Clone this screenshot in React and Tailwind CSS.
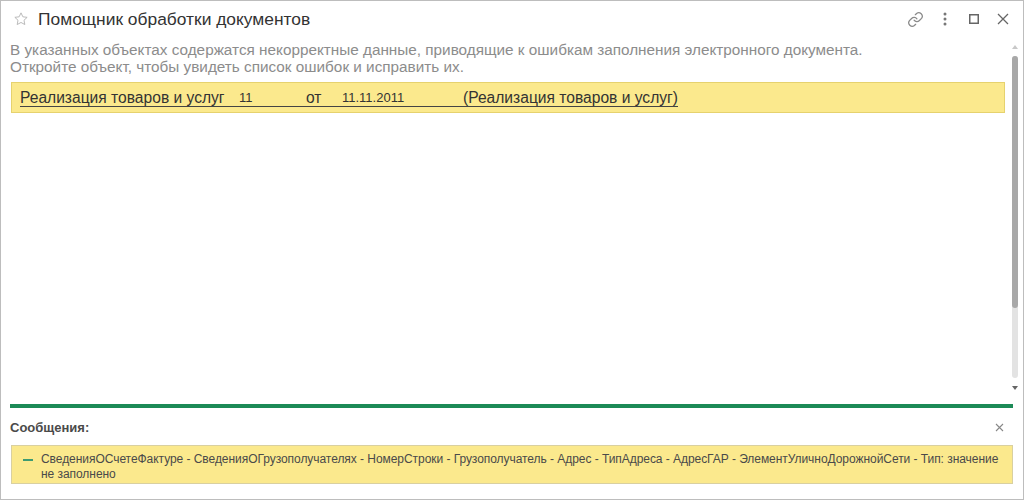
import React from "react";

const Star = () => (
  <svg width="16" height="16" viewBox="0 0 24 24" fill="none" stroke="#b5b5b5" strokeWidth="1.4" strokeLinejoin="round">
    <path d="M12 2.8l2.8 5.9 6.4.8-4.7 4.4 1.2 6.4L12 17.2l-5.7 3.1 1.2-6.4-4.7-4.4 6.4-.8z" />
  </svg>
);

const LinkIcon = () => (
  <svg width="17" height="17" viewBox="0 0 24 24" fill="none" stroke="#8a8a8a" strokeWidth="1.8" strokeLinecap="round">
    <path d="M10 13a5 5 0 0 0 7.5.5l3-3a5 5 0 0 0-7-7l-1.7 1.7" />
    <path d="M14 11a5 5 0 0 0-7.5-.5l-3 3a5 5 0 0 0 7 7l1.7-1.7" />
  </svg>
);

const App = () => {
  return (
    <div
      className="w-[1024px] h-[500px] bg-white border border-[#bdbdbd] flex flex-col text-[#333]"
      style={{ fontFamily: '"Liberation Sans", Arial, sans-serif' }}
    >
      {/* Заголовок окна */}
      <div className="h-[36px] flex items-center shrink-0">
        <div className="w-[37px] flex justify-center pl-[3px]">
          <Star />
        </div>
        <div className="text-[17.4px] text-[#333]">Помощник обработки документов</div>
        <div className="ml-auto flex items-center gap-[12px] pr-[12px] text-[#8a8a8a]">
          <span className="w-[17px] flex justify-center"><LinkIcon /></span>
          <span className="w-[17px] flex justify-center">
            <svg width="4" height="14" viewBox="0 0 4 14" fill="#777">
              <circle cx="2" cy="2" r="1.5" />
              <circle cx="2" cy="7" r="1.5" />
              <circle cx="2" cy="12" r="1.5" />
            </svg>
          </span>
          <span className="w-[17px] flex justify-center">
            <svg width="10" height="10" viewBox="0 0 10 10" fill="none" stroke="#666" strokeWidth="1.5">
              <rect x="0.75" y="0.75" width="8.5" height="8.5" />
            </svg>
          </span>
          <span className="w-[17px] flex justify-center">
            <svg width="12" height="12" viewBox="0 0 12 12" stroke="#666" strokeWidth="1.3">
              <path d="M1 1l10 10M11 1L1 11" />
            </svg>
          </span>
        </div>
      </div>

      {/* Основная область */}
      <div className="flex flex-1 min-h-0">
        <div className="flex-1 pl-[9px] pr-[4px]">
          <div className="text-[15.3px] leading-[17px] text-[#8c8c8c] pt-[4px]">
            <div>В указанных объектах содержатся некорректные данные, приводящие к ошибкам заполнения электронного документа.</div>
            <div>Откройте объект, чтобы увидеть список ошибок и исправить их.</div>
          </div>
          <div className="mt-[7px] ml-[1px] h-[31px] bg-[#fbe98d] border border-[#e6d26e] flex items-center pl-[8px]">
            <div className="flex items-end border-b border-[#444] leading-[17px] text-[15.6px] text-[#333]">
              <span className="w-[219px]">Реализация товаров и услуг</span>
              <span className="w-[67px] text-[13px]">11</span>
              <span className="w-[36px]">от</span>
              <span className="w-[121px] text-[13px]">11.11.2011</span>
              <span>(Реализация товаров и услуг)</span>
            </div>
          </div>
        </div>
        {/* Полоса прокрутки */}
        <div className="w-[14px] flex flex-col items-center pt-[8px] pr-[2px]">
          <svg width="6" height="4" viewBox="0 0 6 4" fill="#c8c8c8"><path d="M0 4L3 0l3 4z" /></svg>
          <div className="mt-[7px] w-[6px] h-[322px] rounded-full bg-[#e3e3e3] flex flex-col">
            <div className="h-[252px] rounded-full bg-[#a8a8a8]" />
          </div>
          <svg className="mt-[8px]" width="6" height="4" viewBox="0 0 6 4" fill="#666"><path d="M0 0h6L3 4z" /></svg>
        </div>
      </div>

      {/* Сообщения */}
      <div className="shrink-0 px-[9px] pb-[15px]">
        <div className="h-[4px] bg-[#1c8a57] mr-[1px]" />
        <div className="flex items-center h-[37px] pt-[2px]">
          <div className="text-[13px] font-bold text-[#4a4a4a]">Сообщения:</div>
          <svg className="ml-auto mr-[10px]" width="9" height="9" viewBox="0 0 9 9" stroke="#888" strokeWidth="1.1">
            <path d="M1 1l7 7M8 1L1 8" />
          </svg>
        </div>
        <div className="ml-[1px] mr-[1px] bg-[#fbe98d] border border-[#d9d0a0] flex pl-[11px] pr-[12px] pt-[6px] pb-[1px]">
          <div className="w-[12px] shrink-0 pt-[7px]">
            <div className="h-[2px] w-[10px] bg-[#3d9b72]" />
          </div>
          <div className="pl-[6px] text-[12px] leading-[15px] tracking-[-0.05px] text-[#4a4a4a]">
            СведенияОСчетеФактуре - СведенияОГрузополучателях - НомерСтроки - Грузополучатель - Адрес - ТипАдреса - АдресГАР - ЭлементУличноДорожнойСети - Тип: значение не заполнено
          </div>
        </div>
      </div>
    </div>
  );
};

export default App;
